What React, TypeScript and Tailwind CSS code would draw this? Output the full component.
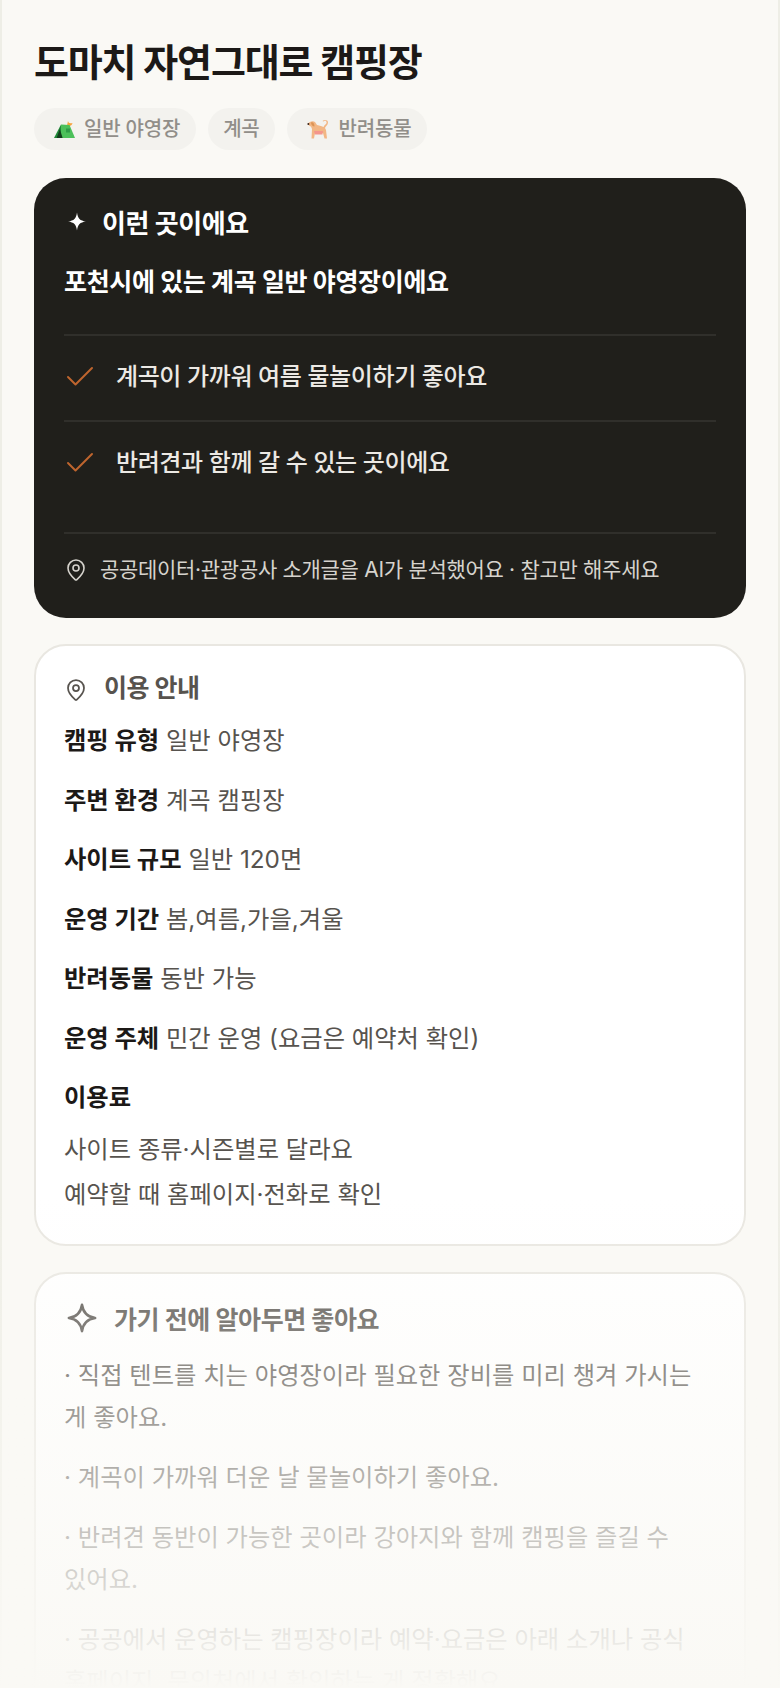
import { Check, MapPin } from "lucide-react";

const bodyFont = "font-['Inter','Noto_Sans_CJK_KR',sans-serif]";

function Sparkle({ className }: { className?: string }) {
  return (
    <svg viewBox="0 0 24 24" className={className} fill="currentColor">
      <path d="M12 0 C13 8 16 11 24 12 C16 13 13 16 12 24 C11 16 8 13 0 12 C8 11 11 8 12 0 Z" />
    </svg>
  );
}

function SparkleOutline({ className }: { className?: string }) {
  return (
    <svg viewBox="0 0 32 32" className={className} fill="none" stroke="currentColor" strokeWidth="2.8" strokeLinejoin="round">
      <path d="M16 2 C17.2 10.5 21.5 14.8 30 16 C21.5 17.2 17.2 21.5 16 30 C14.8 21.5 10.5 17.2 2 16 C10.5 14.8 14.8 10.5 16 2 Z" />
    </svg>
  );
}

function TentIcon() {
  return (
    <svg viewBox="0 0 21 19" className="w-[21px] h-[19px] shrink-0">
      <path d="M14 1 C14.5 3 15.5 3.6 18.5 3 C18 5.5 15.5 7 13 5.5 Z" fill="#f7a33c" />
      <path d="M7 4.5 L15.5 5 L21 18 L7 18 Z" fill="#4cc05a" />
      <path d="M7 4.5 L0 18 L7 18 Z" fill="#1f8a38" />
      <path d="M5.8 9 L2.6 18 L8.6 18 Z" fill="#123f1c" />
      <rect x="12" y="8.5" width="4" height="4" fill="#2f9c47" />
    </svg>
  );
}

function DogIcon() {
  return (
    <svg viewBox="0 0 22 19" className="w-[22px] h-[19px] shrink-0">
      <path d="M1 4 C2 1.5 6 0.5 8 2 L10 5 C13 6 15 6 16.5 7 C17.5 4.5 20 4.5 19.5 2 C19 0.5 17.5 0.5 16.5 1.5 L15.5 1 C17 -0.5 21 -0.5 21 2.5 C21 5 18.5 6 18 8 L19 10 L20 18.5 L17.5 18.5 L16 13 L8 13 L7 18.5 L4.5 18.5 L5 9 L4 6.5 C3 6.5 1.5 5.5 1 4 Z" fill="#f2b684" />
      <path d="M7 11 L16 11 L15.5 14.5 L8 14.5 Z" fill="#f4968c" />
      <path d="M4 2.5 C6 1.5 7.5 3.5 7.5 6.5 C5.5 6.5 4 4.5 4 2.5 Z" fill="#dc9354" />
      <circle cx="1.4" cy="4" r="1" fill="#3a2418" />
    </svg>
  );
}

function InfoRow({ label, value }: { label: string; value: string }) {
  return (
    <p className="text-[24.3px] leading-[36px] text-[#57534e]">
      <span className="font-bold text-[#1c1917]">{label}</span> {value}
    </p>
  );
}

export default function App() {
  return (
    <div className={`${bodyFont} relative h-[1688px] overflow-hidden`}>
      <div className="h-full border-x-2 border-[#eeeee6] bg-[#faf9f5] px-8 pt-[38px]">
        <h1 className="text-[38px] leading-[48px] font-bold text-[#1c1917] tracking-[-1.15px]">
          도마치 자연그대로 캠핑장
        </h1>

        {/* Tags */}
        <div className="flex gap-3 mt-[22px] text-[20px] font-medium text-[#918e89] tracking-[-0.2px]">
          <span className="flex items-center gap-[9px] h-[42px] pl-[20px] pr-[16px] rounded-full bg-[#f3f2ee]">
            <TentIcon />
            일반 야영장
          </span>
          <span className="flex items-center h-[42px] px-[15px] rounded-full bg-[#f3f2ee]">계곡</span>
          <span className="flex items-center gap-[10px] h-[42px] pl-[20px] pr-[16px] rounded-full bg-[#f3f2ee]">
            <DogIcon />
            반려동물
          </span>
        </div>

        {/* Summary card */}
        <section className="mt-[28px] rounded-[32px] bg-[#201f1b] px-[30px] pt-[30px] pb-[32px]">
          <div className="flex items-center gap-[16px] pl-[4px]">
            <Sparkle className="w-[18px] h-[19px] text-white -mt-[5px]" />
            <h2 className="text-[26px] leading-[32px] font-bold text-white tracking-[-0.4px]">이런 곳이에요</h2>
          </div>
          <p className="mt-[26px] pb-[36px] text-[25px] leading-[32px] font-bold text-white tracking-[-0.35px] border-b-2 border-[#302f2b]">
            포천시에 있는 계곡 일반 야영장이에요
          </p>
          <div className="flex items-center gap-[18px] h-[86px] pb-[2px] border-b-2 border-[#302f2b]">
            <Check className="w-[36px] h-[36px] shrink-0 -ml-[2px] text-[#bf652e]" strokeWidth={1.3} />
            <span className="text-[24px] font-medium text-[#ece9e4] tracking-[-0.4px]">계곡이 가까워 여름 물놀이하기 좋아요</span>
          </div>
          <div className="flex items-center gap-[18px] h-[84px] pb-[2px]">
            <Check className="w-[36px] h-[36px] shrink-0 -ml-[2px] text-[#bf652e]" strokeWidth={1.3} />
            <span className="text-[24px] font-medium text-[#ece9e4] tracking-[-0.4px]">반려견과 함께 갈 수 있는 곳이에요</span>
          </div>
          <div className="flex items-center gap-[12px] mt-[26px] pt-[20px] border-t-2 border-[#302f2b]">
            <MapPin className="w-[24px] h-[24px] shrink-0 text-[#d6d3cd]" strokeWidth={1.6} />
            <span className="text-[21px] leading-[32px] text-[#d6d3cd] tracking-[-0.3px]">공공데이터·관광공사 소개글을 AI가 분석했어요 · 참고만 해주세요</span>
          </div>
        </section>

        {/* Info card */}
        <section className="mt-[26px] rounded-[32px] border-2 border-[#e9e7e1] bg-white px-[28px] pt-[27px] pb-[27px]">
          <div className="flex items-center gap-[16px]">
            <MapPin className="w-[24px] h-[24px] shrink-0 mt-1 text-[#57534e]" strokeWidth={1.75} />
            <h2 className="text-[25px] leading-[30px] font-bold text-[#57534e] tracking-[-0.45px]">이용 안내</h2>
          </div>
          <div className="mt-[19px] flex flex-col gap-[23.5px]">
            <InfoRow label="캠핑 유형" value="일반 야영장" />
            <InfoRow label="주변 환경" value="계곡 캠핑장" />
            <InfoRow label="사이트 규모" value="일반 120면" />
            <InfoRow label="운영 기간" value="봄,여름,가을,겨울" />
            <InfoRow label="반려동물" value="동반 가능" />
            <InfoRow label="운영 주체" value="민간 운영 (요금은 예약처 확인)" />
            <div>
              <p className="text-[24.3px] leading-[36px] font-bold text-[#1c1917]">이용료</p>
              <p className="mt-[11.5px] text-[24.3px] leading-[45px] text-[#57534e]">
                사이트 종류·시즌별로 달라요
                <br />
                예약할 때 홈페이지·전화로 확인
              </p>
            </div>
          </div>
        </section>

        {/* Tips card */}
        <section className="mt-[26px] rounded-[32px] border-2 border-[#e9e7e1] bg-white px-[28px] pt-[31px] pb-[40px]">
          <div className="flex items-center gap-[17px] pl-[3px]">
            <SparkleOutline className="w-[30px] h-[30px] shrink-0 -mt-[4px] text-[#57534e]" />
            <h2 className="text-[25px] leading-[30px] font-bold text-[#57534e] tracking-[-0.4px]">가기 전에 알아두면 좋아요</h2>
          </div>
          <div className="mt-[19px] flex flex-col gap-[18px] text-[24.3px] leading-[42px] text-[#57534e] break-keep">
            <p>· 직접 텐트를 치는 야영장이라 필요한 장비를 미리 챙겨 가시는 게 좋아요.</p>
            <p>· 계곡이 가까워 더운 날 물놀이하기 좋아요.</p>
            <p>· 반려견 동반이 가능한 곳이라 강아지와 함께 캠핑을 즐길 수 있어요.</p>
            <p>· 공공에서 운영하는 캠핑장이라 예약·요금은 아래 소개나 공식 홈페이지, 문의처에서 확인하는 게 정확해요.</p>
          </div>
        </section>
      </div>

      {/* Bottom fade over the clamped content */}
      <div className="absolute inset-x-0 bottom-0 h-[490px] bg-gradient-to-b from-[#faf9f500] to-[#faf9f5]" />
    </div>
  );
}
